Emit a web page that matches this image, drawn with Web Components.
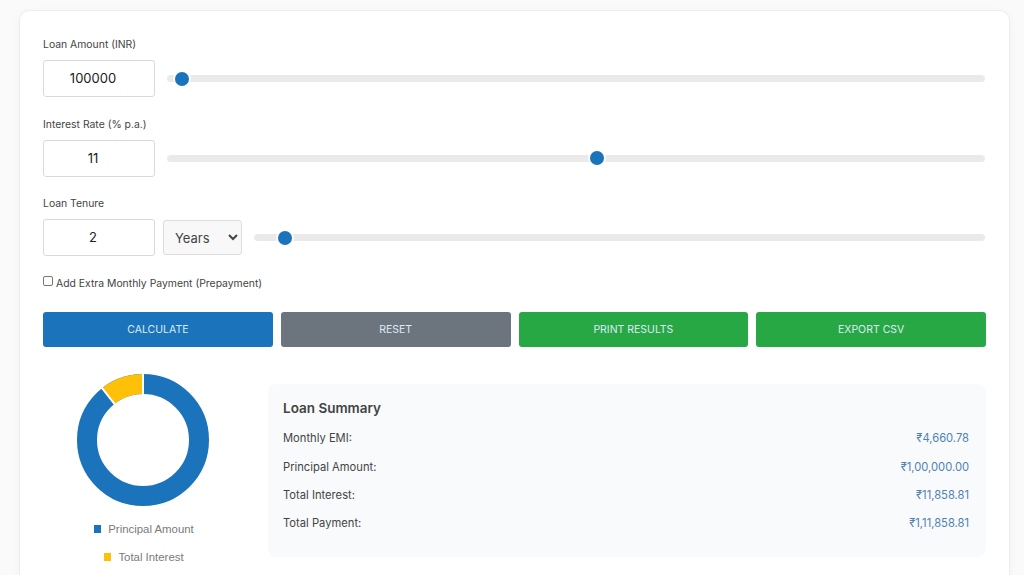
<!DOCTYPE html>
<html>
<head>
<meta charset="utf-8">
<title>EMI Calculator</title>
<style>
  html, body { margin: 0; height: 575px; overflow: hidden; }
  body { background: #fafafa; font-family: Inter, "Liberation Sans", sans-serif; color: #333; }
</style>
</head>
<body>
<emi-card>
  <field-row label="Loan Amount (INR)" value="100000" pos="10"></field-row>
  <field-row label="Interest Rate (% p.a.)" value="11" pos="526"></field-row>
  <field-row label="Loan Tenure" value="2" pos="33" unit="Years"></field-row>
  <prepay-check>Add Extra Monthly Payment (Prepayment)</prepay-check>
  <action-bar>
    <action-button color="#1a73bb">CALCULATE</action-button>
    <action-button color="#6c757d">RESET</action-button>
    <action-button color="#28a745">PRINT RESULTS</action-button>
    <action-button color="#28a745">EXPORT CSV</action-button>
  </action-bar>
  <results-panel>
    <donut-chart slot="chart"></donut-chart>
    <loan-summary slot="summary" heading="Loan Summary">
      <summary-row label="Monthly EMI:" value="₹4,660.78"></summary-row>
      <summary-row label="Principal Amount:" value="₹1,00,000.00"></summary-row>
      <summary-row label="Total Interest:" value="₹11,858.81"></summary-row>
      <summary-row label="Total Payment:" value="₹1,11,858.81"></summary-row>
    </loan-summary>
  </results-panel>
</emi-card>

<script>
  class EmiCard extends HTMLElement {
    constructor() {
      super();
      this.attachShadow({ mode: 'open' });
      this.shadowRoot.innerHTML = `
        <style>
          :host {
            display: block;
            box-sizing: border-box;
            width: 991px;
            height: 565px;
            margin: 10px 0 0 19px;
            padding: 25px 23px 0;
            background: #fff;
            border: 1px solid #ededed;
            border-bottom: 0;
            border-radius: 10px 10px 0 0;
            box-shadow: 0 2px 8px rgba(0, 0, 0, 0.04);
          }
        </style>
        <slot></slot>
      `;
    }
  }

  class FieldRow extends HTMLElement {
    constructor() {
      super();
      this.attachShadow({ mode: 'open' });
    }

    connectedCallback() {
      const label = this.getAttribute('label');
      const value = this.getAttribute('value');
      const pos = this.getAttribute('pos');
      const unit = this.getAttribute('unit');
      const select = unit ? `<select><option>${unit}</option><option>Months</option></select>` : '';

      this.shadowRoot.innerHTML = `
        <style>
          :host { display: block; height: 79.5px; }
          label {
            display: block;
            height: 15px;
            padding-top: 1px;
            margin-bottom: 8px;
            font-size: 10.4px;
            line-height: 15px;
            color: #444;
          }
          .controls { display: flex; align-items: center; gap: 8px; height: 37px; }
          input[type=number] {
            box-sizing: border-box;
            width: 112px;
            height: 37px;
            padding: 0 12px 1px 0;
            border: 1px solid #d9d9d9;
            border-radius: 3px;
            background: #fff;
            font: 400 13px Inter, sans-serif;
            text-align: center;
            color: #222;
            outline: none;
          }
          input[type=number]::-webkit-inner-spin-button { display: none; }
          select {
            box-sizing: border-box;
            width: 79px;
            height: 35px;
            padding: 0 0 0 7px;
            border: 1px solid #ddd;
            border-radius: 3px;
            background-color: #f8f8f8;
            font: 13px Inter, sans-serif;
            color: #444;
          }
          input[type=range] {
            flex: 1;
            min-width: 0;
            height: 7px;
            margin: 0 1px 0 4px;
            border-radius: 4px;
            background: #eaeaea;
            -webkit-appearance: none;
            appearance: none;
            outline: none;
          }
          input[type=range]::-webkit-slider-thumb {
            -webkit-appearance: none;
            width: 14px;
            height: 14px;
            border-radius: 50%;
            background: #1a73bb;
            box-shadow: 0 0 0 2px rgba(255, 255, 255, 0.75);
          }
        </style>
        <label>${label}</label>
        <div class="controls">
          <input type="number" value="${value}">
          ${select}
          <input type="range" min="0" max="1000" value="${pos}">
        </div>
      `;
    }
  }

  class PrepayCheck extends HTMLElement {
    constructor() {
      super();
      this.attachShadow({ mode: 'open' });
      this.shadowRoot.innerHTML = `
        <style>
          :host {
            display: flex;
            align-items: center;
            height: 16px;
            margin-top: 0.5px;
            font-size: 10.4px;
            color: #444;
          }
          input {
            box-sizing: border-box;
            width: 10px;
            height: 10px;
            margin: -4px 3px 0 0;
            -webkit-appearance: none;
            appearance: none;
            background: #fff;
            border: 1px solid #777;
            border-radius: 2px;
          }
        </style>
        <input type="checkbox"><span><slot></slot></span>
      `;
    }
  }

  class ActionBar extends HTMLElement {
    constructor() {
      super();
      this.attachShadow({ mode: 'open' });
      this.shadowRoot.innerHTML = `
        <style>
          :host {
            display: grid;
            grid-template-columns: repeat(4, 1fr);
            gap: 8px;
            margin-top: 21px;
          }
        </style>
        <slot></slot>
      `;
    }
  }

  class ActionButton extends HTMLElement {
    constructor() {
      super();
      this.attachShadow({ mode: 'open' });
    }

    connectedCallback() {
      const color = this.getAttribute('color');
      this.shadowRoot.innerHTML = `
        <style>
          :host { display: block; }
          button {
            display: block;
            width: 100%;
            height: 35px;
            padding: 0;
            border: 0;
            border-radius: 3px;
            background: ${color};
            color: #dcecf6;
            font: 10.5px Inter, sans-serif;
          }
        </style>
        <button><slot></slot></button>
      `;
    }
  }

  class ResultsPanel extends HTMLElement {
    constructor() {
      super();
      this.attachShadow({ mode: 'open' });
      this.shadowRoot.innerHTML = `
        <style>
          :host {
            display: grid;
            grid-template-columns: 200px 718px;
            gap: 25px;
            margin-top: 27px;
          }
        </style>
        <slot name="chart"></slot>
        <slot name="summary"></slot>
      `;
    }
  }

  class DonutChart extends HTMLElement {
    constructor() {
      super();
      this.attachShadow({ mode: 'open' });
      this.shadowRoot.innerHTML = `
        <style>
          :host { display: block; font: 11.4px "Liberation Sans", Arial, sans-serif; color: #7a7a7a; }
          svg { display: block; margin: 0 auto; }
          ul { list-style: none; margin: 9px 0 0; padding: 0 0 0 2px; }
          li {
            display: flex;
            justify-content: center;
            align-items: center;
            gap: 7px;
            height: 28px;
          }
          i { width: 7px; height: 8px; }
        </style>
        <svg width="132" height="132" viewBox="0 0 132 132">
          <circle cx="66" cy="66" r="56" fill="none" stroke="#1a73bb" stroke-width="20"></circle>
          <circle cx="66" cy="66" r="56" fill="none" stroke="#ffc107" stroke-width="20"
            pathLength="360" stroke-dasharray="38.2 321.8" transform="rotate(-128.2 66 66)"></circle>
          <line x1="66" y1="40" x2="66" y2="0" stroke="#fff" stroke-width="2"></line>
          <line x1="50" y1="46" x2="24.5" y2="13.4" stroke="#fff" stroke-width="2"></line>
        </svg>
        <ul>
          <li><i style="background:#1a73bb"></i>Principal Amount</li>
          <li><i style="background:#ffc107"></i>Total Interest</li>
        </ul>
      `;
    }
  }

  class LoanSummary extends HTMLElement {
    constructor() {
      super();
      this.attachShadow({ mode: 'open' });
    }

    connectedCallback() {
      this.shadowRoot.innerHTML = `
        <style>
          :host {
            display: block;
            box-sizing: border-box;
            height: 173px;
            margin-top: 10px;
            padding: 15px 17px 0 15px;
            background: #f8fafc;
            border-radius: 8px;
          }
          h3 {
            margin: 0 0 7px;
            height: 18px;
            font-size: 13.5px;
            line-height: 18px;
            font-weight: 600;
            color: #444;
          }
        </style>
        <h3>${this.getAttribute('heading')}</h3>
        <slot></slot>
      `;
    }
  }

  class SummaryRow extends HTMLElement {
    constructor() {
      super();
      this.attachShadow({ mode: 'open' });
    }

    connectedCallback() {
      this.shadowRoot.innerHTML = `
        <style>
          :host {
            display: flex;
            justify-content: space-between;
            align-items: center;
            height: 28.4px;
            font-size: 11.2px;
            color: #444;
          }
          span + span { color: #4f82b3; }
        </style>
        <span>${this.getAttribute('label')}</span>
        <span>${this.getAttribute('value')}</span>
      `;
    }
  }

  customElements.define('emi-card', EmiCard);
  customElements.define('field-row', FieldRow);
  customElements.define('prepay-check', PrepayCheck);
  customElements.define('action-bar', ActionBar);
  customElements.define('action-button', ActionButton);
  customElements.define('results-panel', ResultsPanel);
  customElements.define('donut-chart', DonutChart);
  customElements.define('loan-summary', LoanSummary);
  customElements.define('summary-row', SummaryRow);
</script>
</body>
</html>
